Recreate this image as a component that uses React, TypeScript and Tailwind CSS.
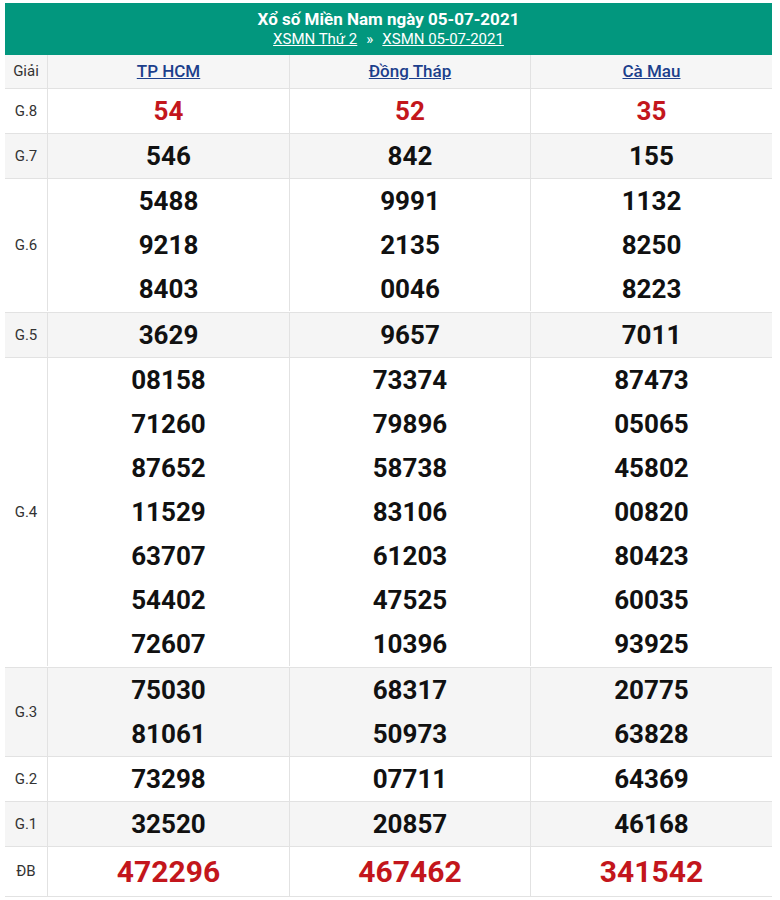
import React from "react";

const cities = ["TP HCM", "Đồng Tháp", "Cà Mau"];

const rows: { label: string; values: string[][]; red?: boolean; big?: boolean; gray?: boolean }[] = [
  { label: "G.8", values: [["54"], ["52"], ["35"]], red: true },
  { label: "G.7", values: [["546"], ["842"], ["155"]], gray: true },
  {
    label: "G.6",
    values: [
      ["5488", "9218", "8403"],
      ["9991", "2135", "0046"],
      ["1132", "8250", "8223"],
    ],
  },
  { label: "G.5", values: [["3629"], ["9657"], ["7011"]], gray: true },
  {
    label: "G.4",
    values: [
      ["08158", "71260", "87652", "11529", "63707", "54402", "72607"],
      ["73374", "79896", "58738", "83106", "61203", "47525", "10396"],
      ["87473", "05065", "45802", "00820", "80423", "60035", "93925"],
    ],
  },
  {
    label: "G.3",
    values: [
      ["75030", "81061"],
      ["68317", "50973"],
      ["20775", "63828"],
    ],
    gray: true,
  },
  { label: "G.2", values: [["73298"], ["07711"], ["64369"]] },
  { label: "G.1", values: [["32520"], ["20857"], ["46168"]], gray: true },
  { label: "ĐB", values: [["472296"], ["467462"], ["341542"]], red: true, big: true },
];

export default function App() {
  return (
    <div className="w-[780px] h-[900px] bg-white pt-[3px] pl-[5px] font-['Roboto',sans-serif]">
      <div className="w-[767px]">
        <div className="h-[52px] bg-[#02977e] flex flex-col items-center justify-center text-white">
          <div className="text-[17px] font-bold leading-[21px]">Xổ số Miền Nam ngày 05-07-2021</div>
          <div className="text-[15px] leading-[19px] flex gap-[9px]">
            <span className="underline">XSMN Thứ 2</span>
            <span>»</span>
            <span className="underline">XSMN 05-07-2021</span>
          </div>
        </div>
        <div className="grid grid-cols-[42px_242px_241px_242px] h-[34px] bg-[#f6f6f6] border-b border-[#e2e2e2]">
          <div className="flex items-center justify-center text-[15px] text-[#333]">Giải</div>
          {cities.map((c) => (
            <div key={c} className="flex items-center justify-center border-l border-[#e2e2e2]">
              <span className="text-[17px] font-medium text-[#1c3f8c] underline">{c}</span>
            </div>
          ))}
        </div>
        {rows.map((r) => (
          <div
            key={r.label}
            className={`grid grid-cols-[42px_242px_241px_242px] border-b border-[#e2e2e2] ${r.gray ? "bg-[#f5f5f5]" : "bg-white"} ${r.values[0].length > 2 ? "pb-[1px]" : ""}`}
          >
            <div className="flex items-center justify-center text-[15px] text-[#333]">{r.label}</div>
            {r.values.map((col, i) => (
              <div key={i} className="flex flex-col items-center justify-center border-l border-[#e2e2e2]">
                {col.map((v) => (
                  <div
                    key={v}
                    className={
                      r.big
                        ? "text-[30px] font-bold leading-[49px] text-[#c3161c]"
                        : r.red
                        ? "text-[26px] font-bold leading-[44px] text-[#c3161c]"
                        : "text-[26px] font-bold leading-[44px] text-[#111]"
                    }
                  >
                    {v}
                  </div>
                ))}
              </div>
            ))}
          </div>
        ))}
      </div>
    </div>
  );
}
